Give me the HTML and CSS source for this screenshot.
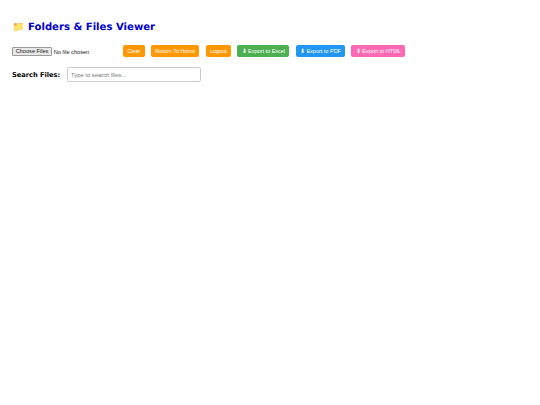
FILE: index.html
```html
<!DOCTYPE html>
<html lang="en">
<head>
<meta charset="utf-8">
<title>Folders &amp; Files Viewer</title>
<link rel="stylesheet" href="styles.css">
</head>
<body>
<h1 class="title"><span class="title-icon">📁</span>Folders &amp; Files Viewer</h1>
<div class="toolbar">
  <input class="file-input" type="file" multiple>
  <button class="btn btn-orange clear">Clear</button>
  <button class="btn btn-orange">Return To Home</button>
  <button class="btn btn-orange">Logout</button>
  <button class="btn btn-green">⬇ Export to Excel</button>
  <button class="btn btn-blue">⬇ Export to PDF</button>
  <button class="btn btn-pink">⬇ Export to HTML</button>
</div>
<div class="search">
  <label class="search-label" for="q">Search Files:</label>
  <input class="search-input" id="q" type="text" placeholder="Type to search files...">
</div>
</body>
</html>
```
FILE: styles.css
```css
html, body { margin: 0; padding: 0; background: #fff; }
body { padding: 20px 12px 0; font-family: "DejaVu Sans", Verdana, sans-serif; text-rendering: geometricPrecision; }
.title { margin: 0; display: flex; align-items: center; gap: 4px; height: 14px; font-size: 10.1px; font-weight: 700; color: #0000cd; }
.title-icon { font-size: 10px; width: 12px; }
.toolbar { display: flex; align-items: center; margin-top: 11px; height: 12px; }
.file-input { width: 105px; margin: 0; font-family: "Liberation Sans", Arial, sans-serif; font-size: 5.625px; color: #222; }
.file-input::file-selector-button { height: 9px; margin: 0 1.5px 0 0; padding: 0 2.7px; border: 1px solid #9a9a9a; border-radius: 1px; background: #e8e8e8; color: #222; font-size: 5.625px; }
.btn { height: 12px; margin: 0 6.2px 0 0; padding: 0 4.3px; border: 0; border-radius: 2px; color: #fff; font-family: "Liberation Sans", Arial, sans-serif; font-size: 5.5px; white-space: nowrap; box-sizing: border-box; }
.clear { margin-left: 6px; }
.btn-orange { background: #ff9800; }
.btn-green { background: #4caf50; }
.btn-blue { background: #2196f3; }
.btn-pink { background: #ff69b4; }
.search { display: flex; align-items: center; gap: 6.8px; margin-top: 10px; }
.search-label { font-size: 6.65px; font-weight: 700; color: #000; }
.search-input { width: 134px; height: 15px; margin: 0; padding: 0 3px; box-sizing: border-box; border: 1px solid #ccc; border-radius: 2px; font-family: "Liberation Sans", Arial, sans-serif; font-size: 5.85px; }
.search-input::placeholder { color: #757575; }
```
